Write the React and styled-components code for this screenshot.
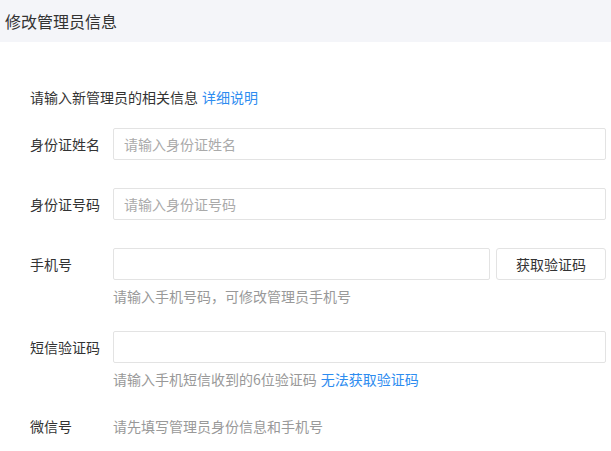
import React from "react";
import styled, { createGlobalStyle } from "styled-components";

const Global = createGlobalStyle`
  html, body { margin: 0; padding: 0; background: #fff; }
  body { font-family: "Microsoft YaHei", "Noto Sans CJK SC", "Liberation Sans", sans-serif; }
  * { box-sizing: border-box; }
`;

const Page = styled.div`
  width: 611px;
  min-height: 451px;
  background: #fff;
`;

const Header = styled.div`
  height: 42px;
  background: #f4f5f9;
  display: flex;
  align-items: center;
  padding-left: 5px;
  font-size: 16px;
  color: #333;
`;

const Content = styled.div`
  padding: 44px 5px 0 30px;
  display: flex;
  flex-direction: column;
`;

const Intro = styled.div`
  font-size: 14px;
  line-height: 22px;
  color: #333;
  margin-bottom: 20px;
`;

const Link = styled.a`
  color: #2d8cf0;
  text-decoration: none;
  cursor: pointer;
  margin-left: 4px;
`;

const Field = styled.div`
  display: flex;
  align-items: flex-start;
  margin-bottom: ${(p) => p.$gap}px;
`;

const Label = styled.div`
  width: 83px;
  flex: none;
  font-size: 14px;
  line-height: 32px;
  color: #333;
`;

const Control = styled.div`
  flex: 1;
  min-width: 0;
  display: flex;
  flex-direction: column;
`;

const InputRow = styled.div`
  display: flex;
  gap: 6px;
`;

const Input = styled.input`
  display: block;
  width: 100%;
  flex: 1 1 auto;
  min-width: 0;
  height: 32px;
  border: 1px solid #e3e3e3;
  border-radius: 2px;
  padding: 0 10px;
  font-size: 14px;
  font-family: inherit;
  color: #333;
  background: #fff;
  outline: none;
  &::placeholder { color: #aaa; }
`;

const Button = styled.button`
  width: 110px;
  height: 32px;
  flex: none;
  border: 1px solid #e3e3e3;
  border-radius: 3px;
  background: #fff;
  font-size: 14px;
  font-family: inherit;
  color: #333;
  cursor: pointer;
`;

const Help = styled.div`
  font-size: 14px;
  line-height: 22px;
  color: #999;
  margin-top: 5px;
`;

const Plain = styled.div`
  font-size: 14px;
  line-height: 32px;
  color: #999;
`;

export default function App() {
  return (
    <Page>
      <Global />
      <Header>修改管理员信息</Header>
      <Content>
        <Intro>
          请输入新管理员的相关信息<Link>详细说明</Link>
        </Intro>
        <Field $gap={28}>
          <Label>身份证姓名</Label>
          <Control>
            <Input placeholder="请输入身份证姓名" />
          </Control>
        </Field>
        <Field $gap={28}>
          <Label>身份证号码</Label>
          <Control>
            <Input placeholder="请输入身份证号码" />
          </Control>
        </Field>
        <Field $gap={24}>
          <Label>手机号</Label>
          <Control>
            <InputRow>
              <Input />
              <Button>获取验证码</Button>
            </InputRow>
            <Help>请输入手机号码，可修改管理员手机号</Help>
          </Control>
        </Field>
        <Field $gap={20}>
          <Label>短信验证码</Label>
          <Control>
            <Input />
            <Help>
              请输入手机短信收到的6位验证码<Link>无法获取验证码</Link>
            </Help>
          </Control>
        </Field>
        <Field $gap={0}>
          <Label>微信号</Label>
          <Plain>请先填写管理员身份信息和手机号</Plain>
        </Field>
      </Content>
    </Page>
  );
}
